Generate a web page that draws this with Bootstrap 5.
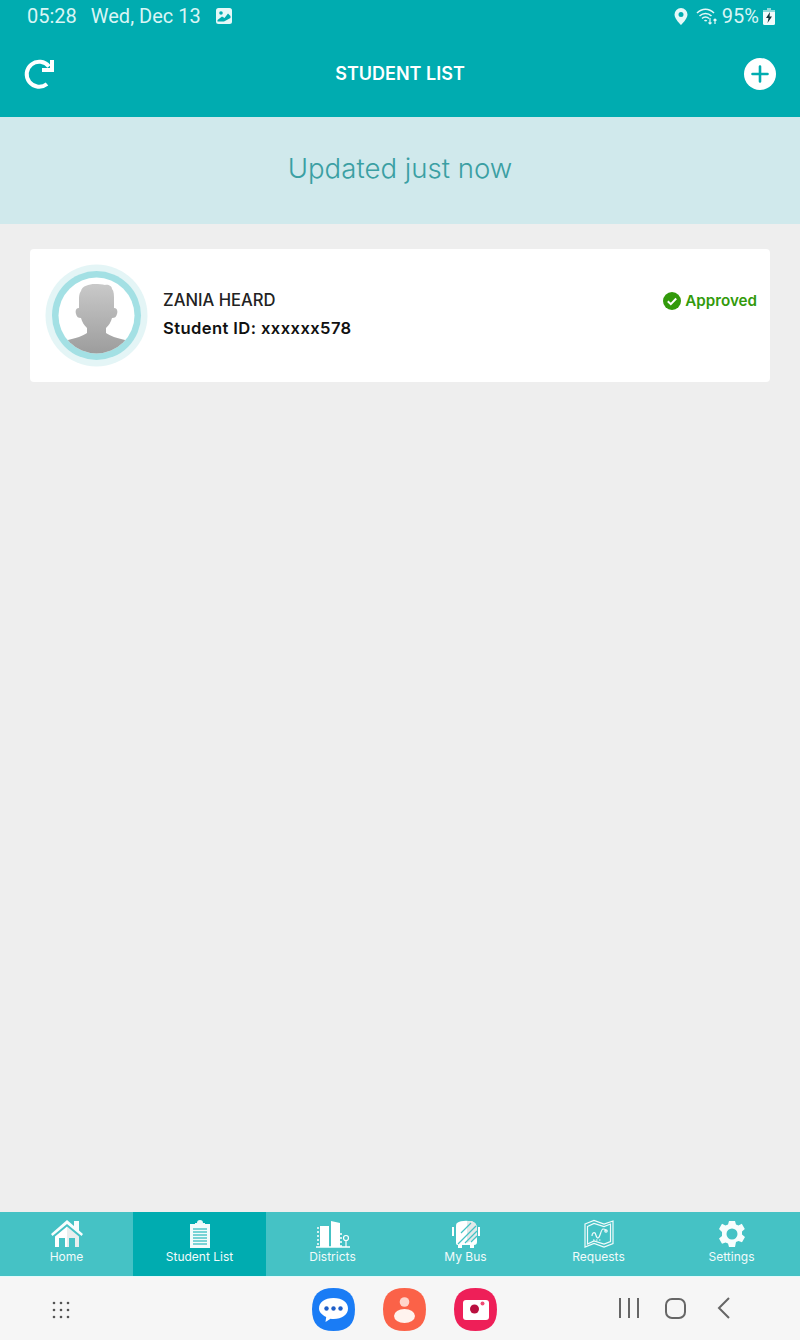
<!DOCTYPE html>
<html lang="en">
<head>
  <meta charset="UTF-8" />
  <title>Student List</title>
  <meta name="viewport" content="width=device-width, initial-scale=1" />
  <link href="https://cdn.jsdelivr.net/npm/bootstrap@5.3.0/dist/css/bootstrap.min.css" rel="stylesheet"/>
  <style>
    html, body { height: 100%; }
    body { background: #eeeeee; font-family: Inter, "Liberation Sans", sans-serif; overflow: hidden; }
    .app-shell { height: 1340px; }
    .teal-top { background: #00acb0; color: #fff; height: 117px; }
    .status-row { height: 32px; padding: 0 26px 0 27px; font-family: Roboto, sans-serif; font-size: 20px; color: #d9f5f5; line-height: 32px; }
    .status-date { margin-left: 14px; margin-right: 15px; }
    .status-right { margin-right: -1px; }
    .title-row { height: 85px; padding: 0 24px 2px 24px; }
    .page-title { font-size: 18px; font-weight: 600; }
    .update-banner { background: #d0e9ec; height: 107px; color: #3a9fa3; font-size: 27.6px; font-weight: 300; padding-bottom: 4px; }
    .student-card { margin: 25px 30px 0; height: 133px; border-radius: 4px; background: #fff; padding: 0 13px 0 15px; }
    .student-name { font-size: 16.6px; font-weight: 500; color: #222; line-height: 20px; }
    .student-id { font-size: 16.6px; font-weight: 600; color: #111; line-height: 20px; margin-top: 8px; letter-spacing: .4px; }
    .student-text { margin-left: 15px; padding-top: 1px; padding-bottom: 4px; }
    .status-ok { color: #329a0b; font-size: 15.2px; font-weight: 600; margin-top: -29px; }
    .tab-strip { background: #45c2c5; height: 64px; }
    .tab-cell { width: 133px; color: #f2fbfb; font-size: 12px; line-height: 14px; padding-top: 7px; }
    .tab-cell svg { display: block; height: 30px; margin-bottom: 1px; }
    .tab-on { background: #00acb0; }
    .sys-nav { background: #f6f6f6; height: 64px; border-top: 1px solid #e4fbfb; padding: 2px 0 0 52px; }
    .app-icons { margin-left: 242px; gap: 28px; }
    .sys-buttons { margin-left: 122px; gap: 26px; padding-bottom: 3px; }
    .sys-back { margin-left: 5px; }
  </style>
</head>
<body>
  <div class="app-shell d-flex flex-column">

    <div class="teal-top">
      <div class="status-row d-flex align-items-center">
        <span>05:28</span>
        <span class="status-date">Wed, Dec 13</span>
        <svg width="16" height="16" viewBox="0 0 16 16"><rect width="16" height="16" rx="2.5" fill="#e6f8f8"/><circle cx="5" cy="5" r="1.8" fill="#00acb0"/><path d="M1.5 12 L6 8.5 L8.5 10 L12 5.5 L14.5 8 V10 L8 13.5 H1.5Z" fill="#00acb0"/></svg>
        <span class="status-right ms-auto d-flex align-items-center">
          <svg width="14" height="17" viewBox="0 0 14 17" class="me-2"><path fill-rule="evenodd" d="M7 0a6.5 6.5 0 0 1 6.5 6.5C13.500 11 7 17 7 17S.5 11 .5 6.500A6.500 6.500 0 0 1 7 0Zm0 4a2.500 2.500 0 1 0 0 5 2.500 2.500 0 0 0 0-5Z" fill="#e6f8f8"/></svg>
          <svg width="22" height="18" viewBox="0 0 22 18" class="me-1" fill="none" stroke="#e6f8f8" stroke-width="1.500"><path d="M1 6c5-5 12-5 17 0"/><path d="M3.500 9c3.500-3.500 8.500-3.500 12 0"/><path d="M6 11.500c2-2 5-2 7 0"/><path d="M8.500 14c.8-.8 1.500-.8 2.300 0"/><path d="M14 11v6M12.500 15.500l1.500 1.500 1.500-1.500M19 17v-5M17.500 13.500l1.500-1.500 1.500 1.500" stroke-width="1.200"/></svg>
          <span>95%</span>
          <svg width="12" height="17" viewBox="0 0 12 17" class="ms-1"><path d="M4 0h4v2H4z" fill="#8fdada"/><rect y="2" width="12" height="15" rx="1.500" fill="#f2fbfb"/><rect y="2" width="12" height="2" fill="#8fdada"/><path d="M7 4 3 10h2.500L4.500 15 9 8.500H6.500Z" fill="#12333a"/></svg>
        </span>
      </div>
      <div class="title-row d-flex align-items-center justify-content-between">
        <svg width="32" height="32" viewBox="0 0 32 32" fill="none" stroke="#fff" stroke-width="4"><path d="M25 8.500A12.500 12.500 0 1 0 23 26"/><path d="M28 2v10H18" stroke-linejoin="miter"/></svg>
        <span class="page-title">STUDENT LIST</span>
        <svg width="32" height="32" viewBox="0 0 32 32"><circle cx="16" cy="16" r="16" fill="#fff"/><path d="M16 8.500v15M8.500 16h15" stroke="#00acb0" stroke-width="2.600" stroke-linecap="round"/></svg>
      </div>
    </div>

    <div class="update-banner d-flex align-items-center justify-content-center">Updated just now</div>

    <div class="student-card d-flex align-items-center">
      <svg width="103" height="103" viewBox="0 0 103 103">
        <defs>
          <linearGradient id="bust" x1="0" y1="0" x2="0" y2="1"><stop offset="0" stop-color="#c9c9c9"/><stop offset="1" stop-color="#999"/></linearGradient>
          <clipPath id="inner"><circle cx="51.500" cy="51.500" r="38"/></clipPath>
        </defs>
        <circle cx="51.500" cy="51.500" r="51" fill="#e4f5f6"/>
        <circle cx="51.500" cy="51.500" r="44.500" fill="#a3e0e4"/>
        <circle cx="51.500" cy="51.500" r="38" fill="#fff"/>
        <path clip-path="url(#inner)" d="M36 27C37 22 44 20 50 20C54 20 57 20 60 21C63 20 67 22 67 25C69 27 69 31 69 36L69 44C72 44 73 47 72 50C71 53 70 54 67 54C66 58 64 61 61 64L61 69C65 72 72 74 80 76L90 95H13L23 76C31 74 38 72 42 69L42 64C39 61 37 58 36 54C33 54 32 53 31 50C30 47 31 44 34 44L34 36C34 32 34 30 36 27Z" fill="url(#bust)"/>
      </svg>
      <div class="student-text">
        <div class="student-name">ZANIA HEARD</div>
        <div class="student-id">Student ID: xxxxxx578</div>
      </div>
      <div class="status-ok ms-auto d-flex align-items-center gap-1">
        <svg width="18" height="18" viewBox="0 0 18 18"><circle cx="9" cy="9" r="9" fill="#329a0b"/><path d="M4.800 9.300 7.800 12.200 13.200 6.500" fill="none" stroke="#fff" stroke-width="2"/></svg>
        <span>Approved</span>
      </div>
    </div>

    <div class="flex-grow-1"></div>

    <div class="tab-strip d-flex text-center">
      <div class="tab-cell">
        <svg class="mx-auto" width="34" height="30" viewBox="0 0 34 30"><path d="M1 15 17 1l7 6V2h5v9.500L33 15l-1.500 2L17 5 2.500 17Z" fill="#f7fdfd"/><path d="M5 17.500 17 7.500V28h-2v-9H9v9H5Z" fill="#fff"/><path d="M17 7.500 29 17.500V28h-4v-9h-6v9h-2Z" fill="#e9eeee"/></svg>
        Home
      </div>
      <div class="tab-cell tab-on">
        <svg class="mx-auto" width="22" height="30" viewBox="0 0 22 30"><path d="M8 4a3 3 0 0 1 6 0h2v3H6V4Z" fill="#e9f9f9"/><rect x="1" y="5" width="20" height="24" fill="#f2fbfb"/><path d="M4 10h14M4 13h14M4 16h14M4 19h14M4 22h14M4 25h14" stroke="#00acb0" stroke-width="1.200"/></svg>
        Student List
      </div>
      <div class="tab-cell">
        <svg class="mx-auto" width="36" height="30" viewBox="0 0 36 30"><path d="M1 28h34" stroke="#fff" stroke-width="1.500"/><path d="M3 8v20M26 14v14" stroke="#fff" stroke-width="1.500" stroke-dasharray="2 2"/><path d="M5 7h9v21H5ZM16 2l9 2v24h-9Z" fill="#fff"/><circle cx="31" cy="19" r="2.500" fill="none" stroke="#fff" stroke-width="1.200"/><path d="M31 21.500V28" stroke="#fff" stroke-width="1.200"/></svg>
        Districts
      </div>
      <div class="tab-cell">
        <svg class="mx-auto" width="32" height="30" viewBox="0 0 32 30"><path d="M2 8h2v9H2ZM28 8h2v9h-2Z" fill="#fff"/><path d="M7 4c4-3 14-3 18 0 2 2 2 6 2 10v9c0 2-1 3-3 3v3h-4v-3h-8v3H8v-3c-2 0-2-1-2-3V8c0-2 0-3 1-4Z" fill="#fff"/><path d="M17 2h5l3 2c2 2 2 6 2 10v5L17 24Z" fill="#e4e9e9"/><path d="M26 7 8 25M27 12 15 24M21 4 11 14M27 17l-6 6" stroke="#45c2c5" stroke-width="1.200"/></svg>
        My Bus
      </div>
      <div class="tab-cell">
        <svg class="mx-auto" width="30" height="30" viewBox="0 0 30 30" fill="none" stroke="#f2fbfb" stroke-width="1.200"><path d="M1 5 10 1.500 20 5l9-3v22.500L20 28 10 24.500 1 28Z"/><path d="M3.500 7.500 10 4.500 20 7.500l6.500-2.500v17.500L20 25l-10-3-6.500 3Z"/><path d="M8 17c0-3 2-4 3-3s1 5 3 5 3-9 5-9 3 1 3 2"/><circle cx="22" cy="12" r="1.200"/><path d="M9 21h8" stroke-dasharray="1.500 1.500"/></svg>
        Requests
      </div>
      <div class="tab-cell">
        <svg class="mx-auto" width="28" height="30" viewBox="0 0 28 28"><path fill-rule="evenodd" d="M11 1h6l1 3.500 2.500 1 3.300-1.700 3 5.200L24 11.500v3l3 2.500-3 5.200-3.500-1.200-2.500 1L17 27h-6l-1-3.500-2.500-1-3.500 1.200-3-5.200 3-2.500v-4L1 9l3-5.200 3.500 1.700 2.500-1ZM14 8.500a5.500 5.500 0 1 0 0 11 5.500 5.500 0 0 0 0-11Z" fill="#f7fdfd"/></svg>
        Settings
      </div>
    </div>

    <div class="sys-nav d-flex align-items-center">
      <svg width="18" height="18" viewBox="0 0 18 18" fill="#555"><circle cx="2" cy="2" r="1.300"/><circle cx="9" cy="2" r="1.300"/><circle cx="16" cy="2" r="1.300"/><circle cx="2" cy="9" r="1.300"/><circle cx="9" cy="9" r="1.300"/><circle cx="16" cy="9" r="1.300"/><circle cx="2" cy="16" r="1.300"/><circle cx="9" cy="16" r="1.300"/><circle cx="16" cy="16" r="1.300"/></svg>
      <div class="app-icons d-flex">
        <svg width="43" height="43" viewBox="0 0 43 43"><path d="M21.500 0C36 0 43 7 43 21.500S36 43 21.500 43 0 36 0 21.500 7 0 21.500 0Z" fill="#1a7cf5"/><path d="M21.500 10c9 0 14.500 4.500 14.500 10.500S30 31 21.500 31c-1 0-2-.1-3-.2l-5 3.200 .7-5C10 27 7 24 7 20.500 7 14.500 12.500 10 21.500 10Z" fill="#fff"/><circle cx="14.500" cy="20.500" r="2.200" fill="#1f5fc8"/><circle cx="21.500" cy="20.500" r="2.200" fill="#1f5fc8"/><circle cx="28.500" cy="20.500" r="2.200" fill="#1f5fc8"/></svg>
        <svg width="43" height="43" viewBox="0 0 43 43"><path d="M21.500 0C36 0 43 7 43 21.500S36 43 21.500 43 0 36 0 21.500 7 0 21.500 0Z" fill="#fb6248"/><circle cx="21.500" cy="14" r="4.800" fill="#ffd5cb"/><ellipse cx="21.500" cy="28" rx="10.500" ry="7" fill="#fff3ee"/></svg>
        <svg width="43" height="43" viewBox="0 0 43 43"><path d="M21.500 0C36 0 43 7 43 21.500S36 43 21.500 43 0 36 0 21.500 7 0 21.500 0Z" fill="#ee1f58"/><rect x="9" y="12" width="26" height="20" rx="3" fill="#fff"/><circle cx="20.500" cy="21" r="4.500" fill="#b9103f"/><circle cx="28.500" cy="15.500" r="2" fill="#ee4a72"/></svg>
      </div>
      <div class="sys-buttons d-flex align-items-center">
        <svg width="20" height="20" viewBox="0 0 20 20" stroke="#666" stroke-width="2"><path d="M1 0v20M10 0v20M19 0v20"/></svg>
        <svg width="21" height="21" viewBox="0 0 21 21" fill="none" stroke="#666" stroke-width="2"><rect x="1" y="1" width="19" height="19" rx="6"/></svg>
        <svg class="sys-back" width="13" height="22" viewBox="0 0 13 22" fill="none" stroke="#666" stroke-width="2"><path d="M12 1 2 11l10 10"/></svg>
      </div>
    </div>
  </div>
  <script src="https://cdn.jsdelivr.net/npm/bootstrap@5.3.0/dist/js/bootstrap.bundle.min.js"></script>
</body>
</html>
